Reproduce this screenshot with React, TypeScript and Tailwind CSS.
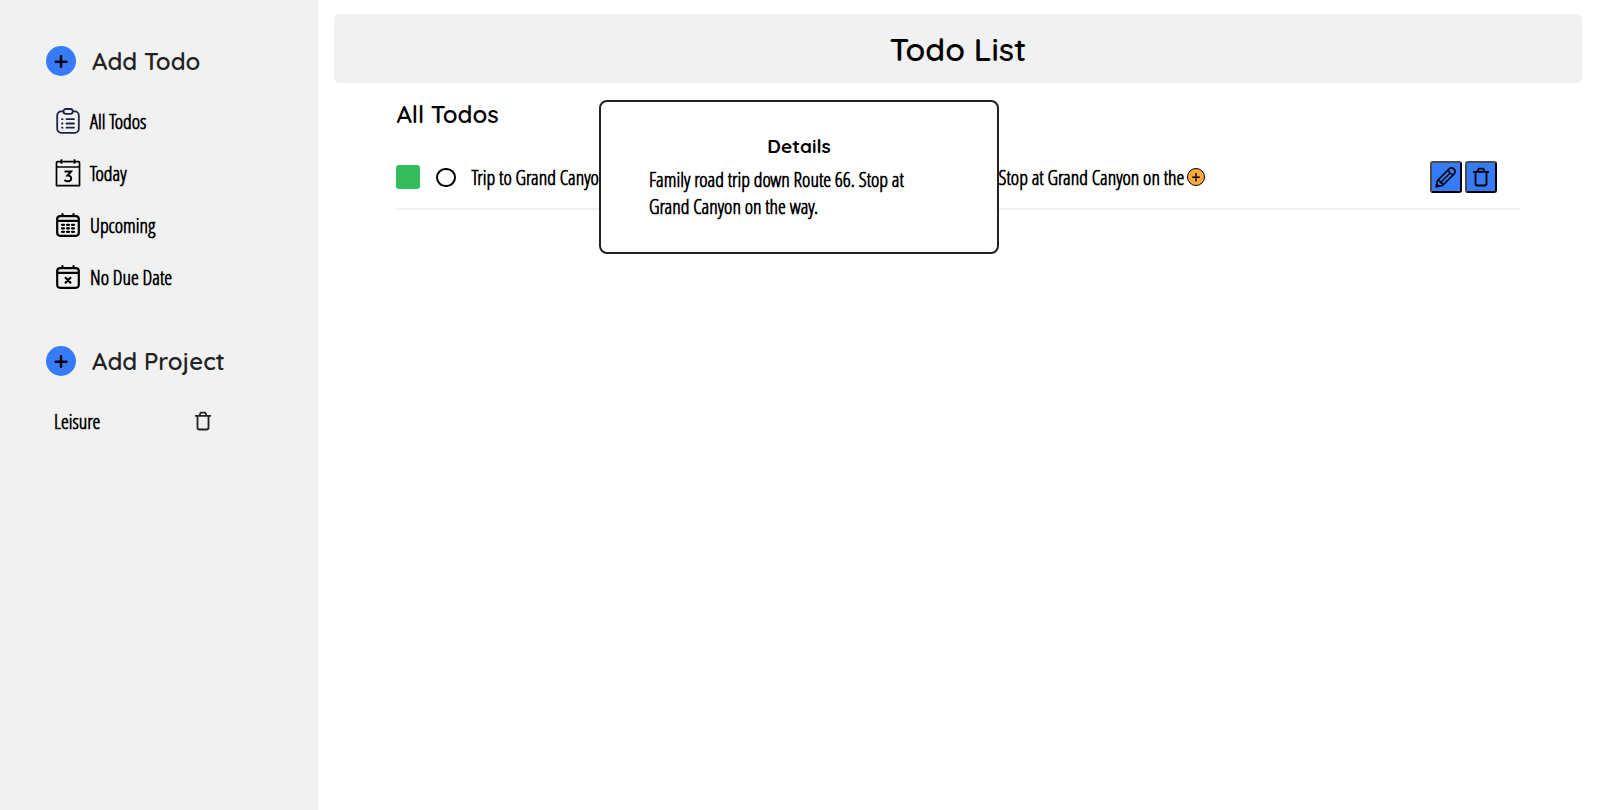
import type { ReactNode } from "react";

const HEADING = "font-['Quicksand','Lato',sans-serif]";
const DETAILS = "Family road trip down Route 66. Stop at Grand Canyon on the way.";

function PlusIcon() {
  return (
    <svg viewBox="0 0 30 30" className="size-[30px] shrink-0" aria-hidden="true">
      <circle cx="15" cy="15" r="15" fill="#367bfb" />
      <path d="M15 10.2v10.6M9.8 15.7h10.6" stroke="#000" strokeWidth="2.5" strokeLinecap="round" />
    </svg>
  );
}

function ClipboardIcon() {
  return (
    <svg viewBox="0 0 26 26" className="size-[26px]" fill="none" stroke="#1b2447" strokeWidth="1.8" strokeLinecap="round" aria-hidden="true">
      <path d="M8 3.4H6.2A4 4 0 0 0 2.2 7.4v13.4a4 4 0 0 0 4 4h13.6a4 4 0 0 0 4-4V7.4a4 4 0 0 0-4-4H18" />
      <rect x="8.5" y="1" width="9.2" height="4.8" rx="2.3" />
      <path d="M11.500 11.200h7.500M11.500 15.500h7.500M11.500 19.700h7.500M7 11.200h.5M7 15.500h.5M7 19.700h.5" />
    </svg>
  );
}

function TodayIcon() {
  return (
    <svg viewBox="0 0 26 28" className="h-7 w-[26px]" fill="none" stroke="#000" strokeWidth="1.7" aria-hidden="true">
      <path d="M1.5 27V3.7a1 1 0 0 1 1-1h21a1 1 0 0 1 1 1V27M1 26.7h24M1.5 8h23M6.5.3v4.4M19.5.3v4.4" />
      <path d="M9.500 12.500h6.500l-3.400 4c2.200-.1 3.600 1 3.600 2.900 0 3.300-5 3.800-6.800 1.500" strokeWidth="2" />
    </svg>
  );
}

function CalendarIcon({ children }: { children: ReactNode }) {
  return (
    <svg viewBox="0 0 26 26" className="size-[26px]" fill="none" stroke="#000" strokeWidth="2.2" strokeLinecap="round" aria-hidden="true">
      <rect x="2.2" y="4.2" width="21.600" height="19.600" rx="3" />
      <path d="M3 8.800h20M7.500 2.200v1.500M18.500 2.200v1.500" />
      {children}
    </svg>
  );
}

function TrashIcon() {
  return (
    <svg viewBox="0 0 20 20" className="size-5" fill="none" stroke="currentColor" strokeWidth="1.8" strokeLinecap="round" strokeLinejoin="round" aria-hidden="true">
      <path d="M2.700 4.800h14.600M4.500 5v11.500a2 2 0 0 0 2 2h7a2 2 0 0 0 2-2V5M6.500 4.500l.8-2.100a1.200 1.200 0 0 1 1.100-.8h3.200a1.200 1.200 0 0 1 1.100.8l.8 2.100" />
    </svg>
  );
}

function PencilIcon() {
  return (
    <svg viewBox="0 0 22 22" className="size-[22px]" fill="none" stroke="#000" strokeWidth="1.600" strokeLinejoin="round" aria-hidden="true">
      <path d="M1.300 20.700l1.200-6.200L14.400 2.600a3.600 3.600 0 0 1 5 5L7.500 19.500z" />
      <path d="M2.500 14.500l2.600.3.200 2 2 .2.200 2.500M13.500 3.500c.2 3 2 4.800 5 5" strokeWidth="1.300" />
      <path d="M5.300 16.800l9.800-9.800" strokeWidth="1.300" />
      <path d="M1.300 20.700l.4-2.300 1.900 1.900z" fill="#000" />
    </svg>
  );
}

function NavItem({ icon, label }: { icon: ReactNode; label: string }) {
  return (
    <li>
      <button type="button" className="flex h-9 items-center gap-2">
        <span className="flex w-7 justify-center">{icon}</span>
        <span>{label}</span>
      </button>
    </li>
  );
}

function AddButton({ label }: { label: string }) {
  return (
    <button type="button" className={`${HEADING} flex items-center gap-4 text-2xl font-semibold text-[#222]`}>
      <PlusIcon />
      {label}
    </button>
  );
}

export default function App() {
  return (
    <div className="flex min-h-screen bg-white font-['Open_Sans_Condensed_Light','Roboto_Condensed',sans-serif] text-[20px] leading-[27px] font-bold text-black">
      <aside className="w-[318px] shrink-0 bg-[#f1f1f1] px-[46px] py-[45px]">
        <AddButton label="Add Todo" />
        <ul className="mt-[26px] flex flex-col gap-4 pl-2">
          <NavItem icon={<ClipboardIcon />} label="All Todos" />
          <NavItem icon={<TodayIcon />} label="Today" />
          <NavItem
            icon={
              <CalendarIcon>
                <path d="M7 12.800h2M12 12.800h2M17 12.800h2M7 16.300h2M12 16.300h2M17 16.300h2M7 19.800h2M12 19.800h2M17 19.800h2" />
              </CalendarIcon>
            }
            label="Upcoming"
          />
          <NavItem
            icon={
              <CalendarIcon>
                <path d="M10.600 13.800l4.800 4.800M15.400 13.800l-4.800 4.800" />
              </CalendarIcon>
            }
            label="No Due Date"
          />
        </ul>
        <div className="mt-[50px]">
          <AddButton label="Add Project" />
        </div>
        <ul className="mt-[26px] pl-2">
          <li className="flex h-9 w-[159px] items-center justify-between">
            <button type="button">Leisure</button>
            <button type="button" aria-label="Delete project" className="text-[#222]">
              <TrashIcon />
            </button>
          </li>
        </ul>
      </aside>

      <main className="min-w-0 flex-1 px-4 pt-[14px]">
        <header className="rounded-[5px] bg-[#f1f1f1] pt-[15px] pb-[13px] text-center">
          <h1 className={`${HEADING} text-[32px] leading-[41px] font-semibold`}>Todo List</h1>
        </header>
        <section className="mx-auto w-[90%] pt-[15px]">
          <h2 className={`${HEADING} text-2xl leading-8 font-semibold`}>All Todos</h2>
          <ul>
            <li className="flex items-center border-b-2 border-[#f1f1f1] pt-[31px] pr-[23px] pb-[15px]">
              <span className="size-6 shrink-0 rounded-[3px] bg-[#34bc5d]" />
              <button type="button" aria-label="Mark as done" className="ml-4 h-[19px] w-5 shrink-0 rounded-full border-2 border-black" />
              <span className="ml-[15px] w-[240px] shrink-0 truncate">Trip to Grand Canyon</span>
              <span className="flex w-[494px] items-center justify-end gap-[3px]">
                <span>Family road trip down Route 66. Stop at Grand Canyon on the</span>
                <button type="button" aria-label="Show full details" className="shrink-0">
                  <svg viewBox="0 0 18 18" className="size-[18px]" stroke="#000" aria-hidden="true">
                    <circle cx="9" cy="9" r="8.500" fill="#fba83d" />
                    <path d="M9 5v8.500M5.200 9.200h7.600" strokeWidth="1.400" />
                  </svg>
                </button>
              </span>
              <span className="ml-auto flex gap-[3px]">
                <button type="button" aria-label="Edit" className="flex size-8 items-center justify-center rounded-[3px] border-2 border-t-[#4c4c4c] border-r-black border-b-black border-l-[#4c4c4c] bg-[#367bfb]">
                  <PencilIcon />
                </button>
                <button type="button" aria-label="Delete" className="flex size-8 items-center justify-center rounded-[3px] border-2 border-t-[#4c4c4c] border-r-black border-b-black border-l-[#4c4c4c] bg-[#367bfb]">
                  <TrashIcon />
                </button>
              </span>
            </li>
          </ul>
        </section>
      </main>

      <div role="dialog" aria-labelledby="details-title" className="fixed top-[100px] left-1/2 w-[400px] -translate-x-1/2 rounded-lg border-2 border-[#222] bg-white px-12 pt-[31px] pb-8">
        <h3 id="details-title" className={`${HEADING} mb-[6px] text-center text-[19px] leading-[27px] font-bold`}>
          Details
        </h3>
        <p className="max-w-[290px]">{DETAILS}</p>
      </div>
    </div>
  );
}
